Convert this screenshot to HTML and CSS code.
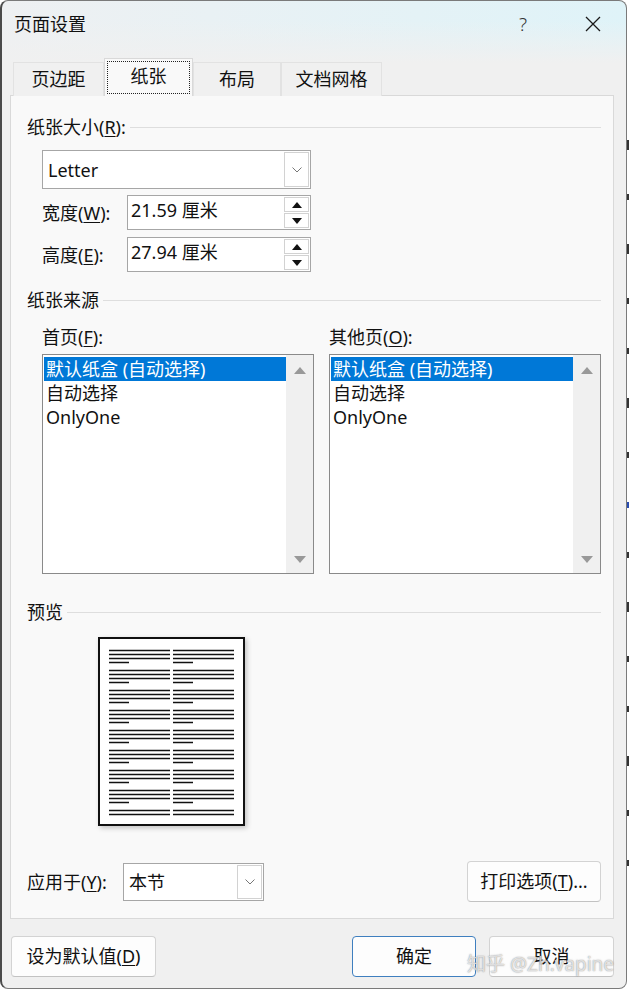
FILE: index.html
```html
<!DOCTYPE html>
<html lang="zh-CN">
<head>
  <meta charset="UTF-8">
  <title>页面设置</title>
  <link rel="stylesheet" href="styles.css">
</head>
<body>
  <div class="screen">
    <div class="dialog">
      <div class="titlebar">
        <span class="title">页面设置</span>
        <span class="help">?</span>
        <span class="close">
          <svg width="16" height="16" viewBox="0 0 16 16"><path d="M1 1L15 15M15 1L1 15" stroke="#1a1a1a" stroke-width="1.3" fill="none"/></svg>
        </span>
      </div>

      <div class="tabs">
        <div class="tab t1">页边距</div>
        <div class="tab t2 active"><span class="focus">纸张</span></div>
        <div class="tab t3">布局</div>
        <div class="tab t4">文档网格</div>
      </div>

      <div class="panel">
        <div class="group-title">纸张大小(<u>R</u>):</div>
        <div class="size-block">
          <div class="combo paper">
            <span class="combo-text">Letter</span>
            <span class="drop"><svg width="10" height="6" viewBox="0 0 10 6"><path d="M0.5 0.5L5 5L9.5 0.5" stroke="#777" fill="none"/></svg></span>
          </div>
          <div class="field-row">
            <span class="field-label">宽度(<u>W</u>):</span>
            <div class="spin">
              <span class="spin-text">21.59 厘米</span>
              <span class="spin-btns">
                <span class="sb"><i class="tri-up"></i></span>
                <span class="sb"><i class="tri-down"></i></span>
              </span>
            </div>
          </div>
          <div class="field-row second">
            <span class="field-label">高度(<u>E</u>):</span>
            <div class="spin">
              <span class="spin-text">27.94 厘米</span>
              <span class="spin-btns">
                <span class="sb"><i class="tri-up"></i></span>
                <span class="sb"><i class="tri-down"></i></span>
              </span>
            </div>
          </div>
        </div>

        <div class="group-title source-title">纸张来源</div>
        <div class="sources">
          <div class="source">
            <div class="list-label">首页(<u>F</u>):</div>
            <div class="listbox">
              <div class="items">
                <div class="item selected">默认纸盒 (自动选择)</div>
                <div class="item">自动选择</div>
                <div class="item">OnlyOne</div>
              </div>
              <div class="scrollbar">
                <i class="sc-up"></i>
                <i class="sc-down"></i>
              </div>
            </div>
          </div>
          <div class="source">
            <div class="list-label">其他页(<u>O</u>):</div>
            <div class="listbox">
              <div class="items">
                <div class="item selected">默认纸盒 (自动选择)</div>
                <div class="item">自动选择</div>
                <div class="item">OnlyOne</div>
              </div>
              <div class="scrollbar">
                <i class="sc-up"></i>
                <i class="sc-down"></i>
              </div>
            </div>
          </div>
        </div>

        <div class="group-title preview-title">预览</div>
        <div class="preview">
          <svg class="page" width="147" height="189" viewBox="0 0 147 189">
            <defs>
              <g id="para" stroke="#111" stroke-width="1.3">
                <path d="M0 0.5H61M0 4.5H61M0 8.5H61M0 12.5H20"/>
              </g>
              <g id="tail" stroke="#111" stroke-width="1.3">
                <path d="M0 0.5H61M0 4.5H61"/>
              </g>
            </defs>
            <rect x="1" y="1" width="145" height="187" fill="#fff" stroke="#111" stroke-width="2"/>
            <use href="#para" x="11" y="13"/><use href="#para" x="75" y="13"/>
            <use href="#para" x="11" y="33"/><use href="#para" x="75" y="33"/>
            <use href="#para" x="11" y="53"/><use href="#para" x="75" y="53"/>
            <use href="#para" x="11" y="73"/><use href="#para" x="75" y="73"/>
            <use href="#para" x="11" y="93"/><use href="#para" x="75" y="93"/>
            <use href="#para" x="11" y="113"/><use href="#para" x="75" y="113"/>
            <use href="#para" x="11" y="133"/><use href="#para" x="75" y="133"/>
            <use href="#para" x="11" y="153"/><use href="#para" x="75" y="153"/>
            <use href="#tail" x="11" y="173"/><use href="#tail" x="75" y="173"/>
          </svg>
        </div>

        <div class="apply-row">
          <span class="apply-label">应用于(<u>Y</u>):</span>
          <div class="combo apply">
            <span class="combo-text">本节</span>
            <span class="drop"><svg width="10" height="6" viewBox="0 0 10 6"><path d="M0.5 0.5L5 5L9.5 0.5" stroke="#777" fill="none"/></svg></span>
          </div>
          <button class="btn print">打印选项(<u>T</u>)...</button>
        </div>
      </div>

      <div class="footer">
        <button class="btn default">设为默认值(<u>D</u>)</button>
        <button class="btn ok">确定</button>
        <button class="btn cancel">取消</button>
      </div>
      <span class="watermark">知乎 @Zh.vapine</span>
    </div>

    <!-- sliver of the document window behind the dialog -->
    <div class="doc-edge">
      <i class="mark tall"></i><i class="mark"></i><i class="mark tall"></i><i class="mark"></i>
      <i class="mark"></i><i class="mark tall"></i><i class="mark"></i><i class="mark blue"></i>
      <i class="mark"></i><i class="mark tall"></i><i class="mark"></i><i class="mark"></i>
      <i class="mark tall"></i><i class="mark"></i><i class="mark"></i>
    </div>
  </div>
</body>
</html>
```

FILE: styles.css
```css
body {
  margin: 0;
  background: #fff;
  font-family: "Noto Sans", "Noto Sans CJK SC", sans-serif;
  font-size: 18px;
  color: #111;
}

u {
  text-decoration-thickness: 1px;
  text-underline-offset: 2px;
}

.screen {
  width: 629px;
  height: 992px;
  display: flex;
  overflow: hidden;
}

.dialog {
  position: relative;
  flex: none;
  width: 627px;
  height: 989px;
  box-sizing: border-box;
  border: 1px solid #7a7a7a;
  border-left: 2px solid #4a4a4a;
  border-radius: 8px;
  background: linear-gradient(to bottom, rgba(240, 240, 240, 0) 20px, #f0f0f0 62px),
              linear-gradient(to right, #eef0f2, #dff3f8);
  background-color: #f0f0f0;
  display: flex;
  flex-direction: column;
}

/* title bar */
.titlebar {
  height: 45px;
  display: flex;
  align-items: center;
  padding: 0 10px 0 12px;
}

.title {
  line-height: 22px;
}

.help {
  margin-left: auto;
  width: 46px;
  text-align: center;
  font-size: 19px;
  font-weight: 300;
  color: #333;
}

.close {
  width: 46px;
  margin-left: 24px;
  display: flex;
  justify-content: center;
}

/* tabs */
.tabs {
  display: flex;
  align-items: flex-end;
  padding: 12px 0 0 11px;
  height: 38px;
  margin-bottom: -1px;
  position: relative;
  z-index: 1;
}

.tab {
  height: 34px;
  box-sizing: border-box;
  display: flex;
  align-items: center;
  justify-content: center;
  border: 1px solid #e2e2e2;
  border-bottom: none;
  background: #f0f0f0;
  line-height: 22px;
  padding-bottom: 1px;
}

.t1 { width: 91px; }
.t2 { width: 89px; }
.t3 { width: 88px; }
.t4 { width: 101px; }

.tab.active {
  height: 38px;
  background: #f9f9f9;
  border-color: #d9d9d9;
  padding: 2px;
}

.focus {
  flex: 1;
  align-self: stretch;
  display: flex;
  align-items: center;
  justify-content: center;
  border: 1px dotted #222;
  padding-bottom: 3px;
}

/* main panel */
.panel {
  height: 824px;
  box-sizing: border-box;
  margin: 0 12px 0 8px;
  border: 1px solid #d9d9d9;
  background: #f9f9f9;
  padding: 20px 12px 0 16px;
  display: flex;
  flex-direction: column;
}

.group-title {
  display: flex;
  align-items: center;
  line-height: 22px;
  white-space: pre;
}

.group-title::after {
  content: "";
  flex: 1;
  height: 1px;
  background: #dedede;
  margin-left: 4px;
}

.size-block {
  margin: 12px 0 0 15px;
  width: 269px;
}

.combo {
  box-sizing: border-box;
  border: 1px solid #a6a6a6;
  background: #fff;
  display: flex;
  align-items: center;
  padding: 1px;
}

.combo.paper {
  height: 39px;
}

.combo-text {
  flex: 1;
  padding-left: 4px;
  line-height: 22px;
}

.drop {
  width: 25px;
  align-self: stretch;
  box-sizing: border-box;
  border: 1px solid #d2d2d2;
  display: flex;
  align-items: center;
  justify-content: center;
}

.field-row {
  display: flex;
  align-items: center;
  margin-top: 6px;
}

.field-row.second {
  margin-top: 7px;
}

.field-label {
  width: 85px;
  line-height: 22px;
}

.spin {
  width: 184px;
  height: 35px;
  box-sizing: border-box;
  border: 1px solid #a6a6a6;
  background: #fff;
  display: flex;
  align-items: center;
  padding: 1px;
}

.spin-text {
  flex: 1;
  padding-left: 2px;
  line-height: 22px;
  padding-bottom: 5px;
}

.spin-btns {
  width: 25px;
  align-self: stretch;
  display: flex;
  flex-direction: column;
  gap: 1px;
}

.sb {
  flex: 1;
  border: 1px solid #d2d2d2;
  display: flex;
  align-items: center;
  justify-content: center;
}

.tri-up,
.tri-down {
  width: 0;
  height: 0;
  border-left: 5px solid transparent;
  border-right: 5px solid transparent;
}

.tri-up { border-bottom: 6px solid #111; }
.tri-down { border-top: 6px solid #111; }

/* paper source lists */
.source-title {
  margin-top: 17px;
}

.sources {
  display: flex;
  gap: 15px;
  margin: 15px 0 0 15px;
  width: 559px;
}

.source {
  width: 272px;
}

.list-label {
  line-height: 22px;
}

.listbox {
  margin-top: 6px;
  height: 220px;
  box-sizing: border-box;
  border: 1px solid #8a8a8a;
  background: #fff;
  display: flex;
}

.items {
  flex: 1;
  padding: 2px 0 0 1px;
}

.item {
  height: 24px;
  line-height: 24px;
  padding-left: 2px;
  white-space: nowrap;
}

.item.selected {
  background: #0078d7;
  color: #fff;
}

.scrollbar {
  width: 27px;
  background: #f0f0f0;
  display: flex;
  flex-direction: column;
  justify-content: space-between;
  align-items: center;
  padding: 12px 0 10px;
}

.sc-up,
.sc-down {
  width: 0;
  height: 0;
  border-left: 6px solid transparent;
  border-right: 6px solid transparent;
}

.sc-up { border-bottom: 7px solid #999; }
.sc-down { border-top: 7px solid #999; }

/* preview */
.preview-title {
  margin-top: 27px;
}

.preview {
  margin: 14px 0 0 71px;
}

.page {
  display: block;
  box-shadow: 2px 2px 5px rgba(0, 0, 0, 0.22);
}

.apply-row {
  display: flex;
  align-items: center;
  margin-top: 35px;
}

.apply-label {
  width: 96px;
  line-height: 22px;
}

.combo.apply {
  width: 141px;
  height: 38px;
}

/* buttons */
.btn {
  font: inherit;
  color: #111;
  background: #fdfdfd;
  border: 1px solid #d3d3d3;
  border-bottom-color: #c2c2c2;
  border-radius: 4px;
  height: 41px;
  padding: 0 0 2px;
  line-height: 22px;
}

.btn.print {
  margin-left: auto;
  width: 134px;
}

.footer {
  display: flex;
  padding: 17px 12px 0 9px;
  gap: 13px;
}

.btn.default {
  width: 145px;
  margin-right: auto;
}

.btn.ok {
  width: 124px;
  border-color: #3f7fbf;
}

.btn.cancel {
  width: 125px;
}

.watermark {
  position: absolute;
  left: 465px;
  top: 951px;
  font-size: 19px;
  line-height: 24px;
  color: rgba(255, 255, 255, 0.7);
  text-shadow: 0 0 1px rgba(90, 90, 90, 0.6), 0 0 2px rgba(120, 120, 120, 0.35);
  white-space: nowrap;
}

.doc-edge {
  flex: 1;
  overflow: hidden;
  padding-top: 140px;
  display: flex;
  flex-direction: column;
  gap: 44px;
  align-items: flex-start;
}

.mark {
  width: 2px;
  height: 6px;
  background: #333;
}

.mark.tall {
  height: 10px;
}

.mark.blue {
  background: #2a4db0;
}
```
